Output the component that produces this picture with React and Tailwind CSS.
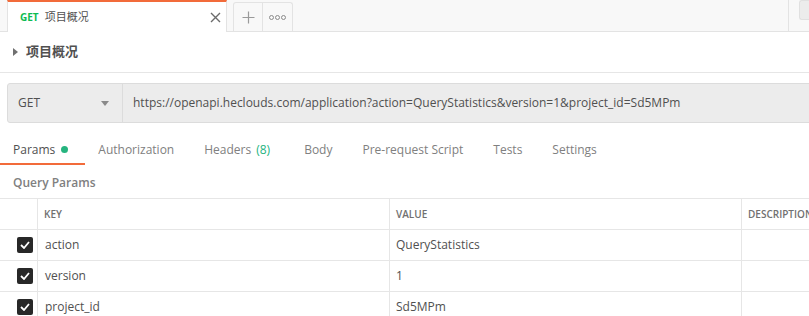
import React from "react";

export default function App() {
  const tabs = [
    { label: "Params", active: true, dot: true },
    { label: "Authorization" },
    { label: "Headers", count: "(8)" },
    { label: "Body" },
    { label: "Pre-request Script" },
    { label: "Tests" },
    { label: "Settings" },
  ];

  const params = [
    { key: "action", value: "QueryStatistics" },
    { key: "version", value: "1" },
    { key: "project_id", value: "Sd5MPm" },
  ];

  return (
    <div className="w-[809px] h-[316px] overflow-hidden bg-white text-[#505050] font-['Open_Sans','Noto_Sans_CJK_SC',sans-serif]">
      {/* request tabs */}
      <div className="h-[32px] flex bg-[#f8f8f8] border-b border-[#e3e3e3] pl-[7px]">
        <div className="w-[220px] mb-[-1px] bg-white border-l border-r border-[#e3e3e3] border-t-2 border-t-[#f26b3a] flex items-center pl-[12px] pr-[5px]">
          <span className="text-[10px] font-bold text-[#0cbb52]">GET</span>
          <span className="ml-[6px] text-[11px] text-[#505050]">项目概况</span>
          <svg className="ml-auto" width="11" height="11" viewBox="0 0 11 11">
            <path d="M1 1 L10 10 M10 1 L1 10" stroke="#6b6b6b" strokeWidth="1.4" />
          </svg>
        </div>
        <div className="ml-[6px] mt-[2px] flex border border-b-0 border-[#e3e3e3] rounded-t-[3px] bg-[#f8f8f8]">
          <div className="w-[29px] flex items-center justify-center border-r border-[#e3e3e3]">
            <svg width="13" height="13" viewBox="0 0 13 13">
              <path d="M6.5 0.5 V12.5 M0.5 6.5 H12.5" stroke="#9a9a9a" strokeWidth="1.2" />
            </svg>
          </div>
          <div className="w-[29px] flex items-center justify-center">
            <svg width="17" height="5" viewBox="0 0 17 5">
              <circle cx="2.5" cy="2.5" r="2" fill="none" stroke="#8a8a8a" strokeWidth="1" />
              <circle cx="8.5" cy="2.5" r="2" fill="none" stroke="#8a8a8a" strokeWidth="1" />
              <circle cx="14.5" cy="2.5" r="2" fill="none" stroke="#8a8a8a" strokeWidth="1" />
            </svg>
          </div>
        </div>
        <div className="flex-1" />
        <div className="w-[11px] border-l border-[#e3e3e3]" />
        <div className="w-[10px] h-[20px] bg-[#ececec] rounded-l-[3px] border border-r-0 border-[#e0e0e0]" />
      </div>

      {/* title */}
      <div className="h-[41px] flex items-center pl-[13px] border-b border-[#e6e6e6]">
        <svg width="5" height="8" viewBox="0 0 5 8">
          <path d="M0 0 L5 4 L0 8 Z" fill="#707070" />
        </svg>
        <span className="ml-[8px] text-[13px] font-bold text-[#505050]">项目概况</span>
      </div>

      {/* url bar */}
      <div className="mt-[10px] ml-[7px] w-[820px] h-[40px] flex bg-[#ececec] border border-[#dcdcdc] rounded-[3px]">
        <div className="w-[115px] flex items-center pl-[10px] pr-[13px] border-r border-[#dcdcdc]">
          <span className="text-[12px] text-[#505050]">GET</span>
          <svg className="ml-auto" width="8" height="5" viewBox="0 0 8 5">
            <path d="M0 0 L8 0 L4 5 Z" fill="#8a8a8a" />
          </svg>
        </div>
        <div className="flex items-center pl-[10px] text-[12px] text-[#505050] whitespace-nowrap">
          https://openapi.heclouds.com/application?action=QueryStatistics&amp;version=1&amp;project_id=Sd5MPm
        </div>
      </div>

      {/* tabs */}
      <div className="mt-[13px] flex">
        {tabs.map((t) => (
          <div
            key={t.label}
            className={
              "h-[29px] flex items-center pl-[13px] text-[12px] whitespace-nowrap border-b-[2px] " +
              (t.count ? "pr-[21px] " : "pr-[17px] ") +
              (t.active ? "border-[#f26b3a] text-[#505050]" : "border-transparent text-[#808080]")
            }
          >
            {t.label}
            {t.dot && <span className="ml-[6px] w-[7px] h-[7px] rounded-full bg-[#26b47f]" />}
            {t.count && <span className="ml-[5px] text-[#26b47f]">{t.count}</span>}
          </div>
        ))}
      </div>

      <div className="mt-[10px] pl-[13px] leading-[16px] text-[12px] font-semibold text-[#808080]">Query Params</div>

      {/* params table */}
      <div className="mt-[7px] w-[900px] border-t border-[#e6e6e6]">
        <div className="h-[31px] grid grid-cols-[37px_352px_352px_1fr] border-b border-[#e6e6e6] text-[10px] font-semibold text-[#707070]">
          <div />
          <div className="border-l border-[#e6e6e6] flex items-center pl-[6px]">KEY</div>
          <div className="border-l border-[#e6e6e6] flex items-center pl-[6px]">VALUE</div>
          <div className="border-l border-[#e6e6e6] flex items-center pl-[6px]">DESCRIPTION</div>
        </div>
        {params.map((p) => (
          <div key={p.key} className="h-[31px] grid grid-cols-[37px_352px_352px_1fr] border-b border-[#e6e6e6] text-[12px] text-[#505050]">
            <div className="flex items-center pl-[17px]">
              <span className="w-[16px] h-[16px] rounded-[2px] bg-[#282828] flex items-center justify-center">
                <svg width="10" height="8" viewBox="0 0 10 8">
                  <path d="M1 4 L4 7 L9 1" fill="none" stroke="#ffffff" strokeWidth="1.8" />
                </svg>
              </span>
            </div>
            <div className="border-l border-[#e6e6e6] flex items-center pl-[7px]">{p.key}</div>
            <div className="border-l border-[#e6e6e6] flex items-center pl-[6px]">{p.value}</div>
            <div className="border-l border-[#e6e6e6]" />
          </div>
        ))}
      </div>
    </div>
  );
}
